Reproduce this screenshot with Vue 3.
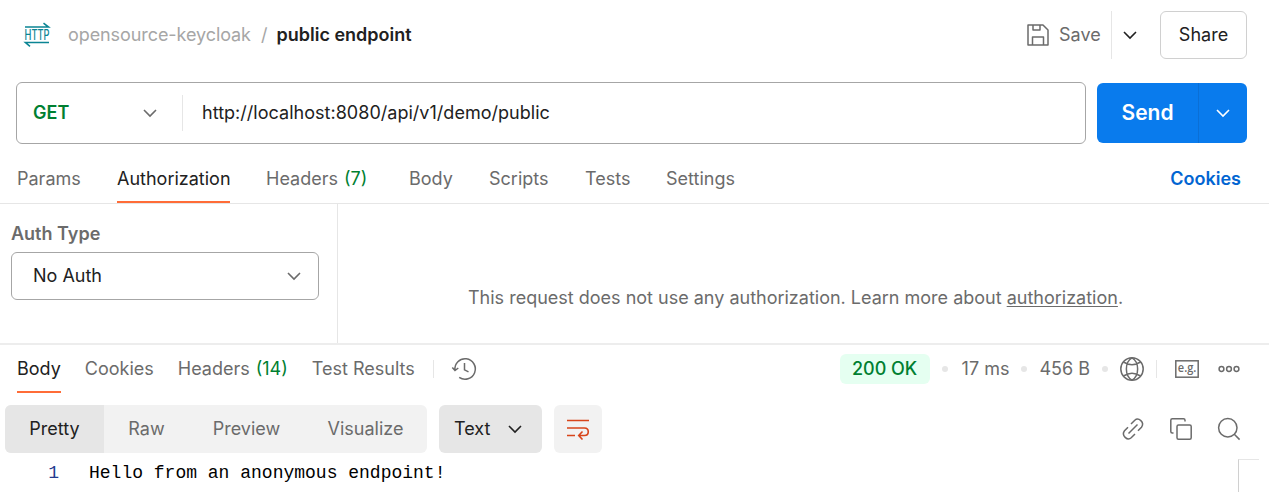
<script setup>
const requestTabs = [
  { label: 'Params', width: 64 },
  { label: 'Authorization', width: 113, active: true },
  { label: 'Headers', count: '(7)', width: 101 },
  { label: 'Body', width: 44 },
  { label: 'Scripts', width: 60 },
  { label: 'Tests', width: 45 },
  { label: 'Settings', width: 70 },
]
const responseTabs = [
  { label: 'Body', active: true },
  { label: 'Cookies' },
  { label: 'Headers', count: '(14)' },
  { label: 'Test Results' },
]
const views = ['Pretty', 'Raw', 'Preview', 'Visualize']
</script>

<template>
  <main class="app">
    <header class="top">
      <svg class="http" width="26" height="26" viewBox="0 0 26 26">
        <path d="M1 5H24.500L19.500 1.200M25 20.500H1.500L6 24.300" fill="none" stroke="#0b8594" stroke-width="1.6" />
        <text x="0.500" y="17.800" textLength="25" lengthAdjust="spacingAndGlyphs" font-size="14" font-weight="500" fill="#0b8594">HTTP</text>
      </svg>
      <span class="crumb">opensource-keycloak</span>
      <span class="slash">/</span>
      <span class="name">public endpoint</span>
      <div class="actions">
        <svg class="disk" width="22" height="22" viewBox="0 0 22 22">
          <path d="M1 1H16L21 6V21H1ZM6 1V6H13V1M5.5 21V13H16.5V21" />
        </svg>
        <span class="save">Save</span>
        <i class="save-line"></i>
        <svg class="chev dark" width="14" height="8" viewBox="0 0 14 8"><path d="M1 1L7 7L13 1" /></svg>
        <button class="share">Share</button>
      </div>
    </header>

    <section class="request">
      <div class="url-box">
        <span class="method">GET</span>
        <svg class="chev" width="14" height="8" viewBox="0 0 14 8"><path d="M1 1L7 7L13 1" /></svg>
        <i class="url-line"></i>
        <span class="url">http://localhost:8080/api/v1/demo/public</span>
      </div>
      <div class="send">
        <span class="send-label">Send</span>
        <span class="send-more"><svg class="chev white" width="14" height="8" viewBox="0 0 14 8"><path d="M1 1L7 7L13 1" /></svg></span>
      </div>
    </section>

    <nav class="req-tabs">
      <span v-for="t in requestTabs" :key="t.label" class="tab" :class="{ active: t.active }" :style="{ width: t.width + 'px' }">{{ t.label }}<span v-if="t.count" class="count">{{ t.count }}</span></span>
      <span class="cookies">Cookies</span>
    </nav>

    <section class="auth">
      <div class="auth-side">
        <span class="auth-title">Auth Type</span>
        <div class="select">
          <span>No Auth</span>
          <svg class="chev" width="14" height="8" viewBox="0 0 14 8"><path d="M1 1L7 7L13 1" /></svg>
        </div>
      </div>
      <p class="auth-info">This request does not use any authorization. Learn more about <u>authorization</u>.</p>
    </section>

    <nav class="res-tabs">
      <span v-for="t in responseTabs" :key="t.label" class="tab" :class="{ active: t.active }">{{ t.label }}<span v-if="t.count" class="count">{{ t.count }}</span></span>
      <i class="short-line"></i>
      <svg class="history line" width="26" height="24" viewBox="0 0 26 24">
        <path d="M3 13.300A10.200 10.200 0 1 1 7.200 20.300M.300 10.500L3 13.500L6.300 11M12.500 6V12.800L16.500 14.800" />
      </svg>
      <div class="status">
        <span class="ok">200 OK</span>
        <i class="dot first"></i>
        <span class="time">17 ms</span>
        <i class="dot"></i>
        <span class="size">456 B</span>
        <i class="dot"></i>
        <svg class="globe line" width="24" height="24" viewBox="0 0 24 24">
          <circle cx="12" cy="12" r="11.2" />
          <path d="M12 .8C4.5 5 4.5 19 12 23.2C19.500 19 19.500 5 12 .8M3.500 5Q12 10.400 20.500 5M3.500 19Q12 13.600 20.500 19" />
        </svg>
        <i class="short-line"></i>
        <svg class="example" width="24" height="18" viewBox="0 0 24 18">
          <rect x=".8" y=".8" width="22.400" height="16.400" fill="none" stroke="#6b6b6b" stroke-width="1.500" />
          <text class="eg" x="2.800" y="11.800" textLength="18.500" lengthAdjust="spacingAndGlyphs">e.g.</text>
        </svg>
        <svg class="more line" width="22" height="8" viewBox="0 0 22 8">
          <circle cx="3.500" cy="4" r="2.400" /><circle cx="11" cy="4" r="2.400" /><circle cx="18.500" cy="4" r="2.400" />
        </svg>
      </div>
    </nav>

    <section class="toolbar">
      <div class="views">
        <span v-for="(v, i) in views" :key="v" class="view" :class="['v' + i, { on: i === 0 }]">{{ v }}</span>
      </div>
      <div class="format">
        <span>Text</span>
        <svg class="chev dark" width="14" height="8" viewBox="0 0 14 8"><path d="M1 1L7 7L13 1" /></svg>
      </div>
      <div class="wrap">
        <svg width="24" height="22" viewBox="0 0 24 22">
          <path d="M1 2.500H23M1 10H18.500C23.500 10 23.500 17.500 18.500 17.500H13M16.500 13.500L12.700 17.500L16.500 21.500M1 17.500H9" />
        </svg>
      </div>
      <div class="tools">
        <svg class="line" width="22" height="22" viewBox="0 0 22 22">
          <path d="M6.500 15.500L15.500 6.500M9 6L12.800 2.200C16.500-1.200 23 4.500 19.500 9.200L16 12.800M13 16L9.200 19.800C5.500 23.200-1 17.500 2.500 12.800L6 9.200" />
        </svg>
        <svg class="line" width="22" height="22" viewBox="0 0 22 22">
          <rect x="7" y="7" width="14.200" height="14.200" rx="1.500" />
          <path d="M3.500 15H2.300Q.8 15 .8 13.500V2.300Q.8.8 2.300.8H13.500Q15 .8 15 2.300V3.500" />
        </svg>
        <svg class="line" width="22" height="22" viewBox="0 0 22 22">
          <circle cx="9.800" cy="9.800" r="9.200" /><path d="M16.300 16.300L21.600 21.600" />
        </svg>
      </div>
    </section>

    <section class="code">
      <span class="num">1</span>
      <code>Hello from an anonymous endpoint!</code>
      <i class="gutter"></i>
    </section>
  </main>
</template>

<style>
body { margin: 0; background: #fff; overflow: hidden; }
</style>

<style scoped>
* { box-sizing: border-box; }
.app { width: 1269px; height: 492px; overflow: hidden; background: #fff; color: #6b6b6b; font: 400 18px/24px Inter, sans-serif; white-space: nowrap; }
svg { display: block; flex: none; overflow: visible; }
i { display: block; flex: none; }
.line { fill: none; stroke: #6b6b6b; stroke-width: 1.5; }
.chev { fill: none; stroke: #6b6b6b; stroke-width: 1.6; }
.chev.dark { stroke: #212121; }
.chev.white { stroke: #fff; }

.top { display: flex; align-items: center; height: 70px; padding-left: 24px; }
.crumb { margin-left: 18px; width: 193px; color: #a6a6a6; letter-spacing: -0.08px; }
.slash { width: 15.5px; color: #a6a6a6; }
.name { color: #212121; font-weight: 600; }
.actions { display: flex; align-items: center; margin-left: auto; margin-right: 22px; }
.disk { fill: none; stroke: #6b6b6b; stroke-width: 1.5; stroke-linejoin: round; }
.save { width: 43px; margin-left: 10px; }
.save-line { width: 1px; height: 48px; margin: 0 11px 0 9px; background: #e6e6e6; }
.share { width: 87px; height: 48px; margin-left: 23px; padding: 0; border: 1px solid #d0d0d0; border-radius: 6px; background: #fff; color: #212121; font: inherit; }

.request { display: flex; align-items: center; height: 62px; margin-top: 12px; padding-left: 16px; }
.url-box { display: flex; align-items: center; width: 1070px; height: 62px; border: 1px solid #a6a6a6; border-radius: 6px; }
.method { width: 110px; margin-left: 16px; color: #007f31; font-weight: 600; }
.url-line { width: 1px; height: 36px; margin: 0 19px 0 25px; background: #e6e6e6; }
.url { color: #212121; letter-spacing: 0.025px; }
.send { display: flex; width: 150px; height: 60px; margin-left: 11px; border-radius: 6px; overflow: hidden; background: #097bed; color: #fff; }
.send-label { width: 101px; text-align: center; font-size: 21px; line-height: 60px; font-weight: 600; }
.send-more { display: flex; align-items: center; justify-content: center; flex: 1; border-left: 1px solid #0a6fd6; }

.req-tabs { display: flex; gap: 0 36px; height: 60px; padding: 10px 28px 0 17px; border-bottom: 1px solid #e6e6e6; }
.tab { flex: none; height: 49px; line-height: 49px; }
.tab.active { color: #212121; border-bottom: 2px solid #ff6c37; }
.count { margin-left: 6px; color: #007f31; }
.req-tabs .tab:nth-child(4) { margin-left: 6px; }
.cookies { margin-left: auto; line-height: 49px; color: #0265d2; font-weight: 600; }

.auth { display: flex; height: 139px; }
.auth-side { width: 338px; padding: 18px 18px 0 11px; border-right: 1px solid #e6e6e6; }
.auth-title { display: block; font-weight: 600; }
.select { display: flex; align-items: center; justify-content: space-between; width: 308px; height: 48px; margin-top: 6px; padding: 0 17px 0 21px; border: 1px solid #a6a6a6; border-radius: 6px; color: #212121; }
.auth-info { margin: 82px 0 0 130px; }
.auth-info u { text-underline-offset: 2px; text-decoration-thickness: 1px; }

.res-tabs { display: flex; align-items: center; gap: 24px; height: 50px; padding: 0 29px 0 17px; border-top: 2px solid #ededed; }
.res-tabs .tab { height: 48px; line-height: 47px; }
.short-line { width: 1px; height: 18px; background: #e6e6e6; }
.res-tabs > .short-line { margin: 0 -6px; }
.status { display: flex; align-items: center; margin-left: auto; }
.ok { width: 90px; height: 30px; border-radius: 6px; background: #e5fff1; color: #007f31; font-weight: 500; line-height: 30px; text-align: center; }
.dot { width: 6px; height: 6px; margin: 0 12px; border-radius: 50%; background: #e6e6e6; }
.dot.first { margin-right: 14px; }
.status .short-line { margin: 0 18px 0 12px; }
.eg { font: 600 12.5px "Open Sans", sans-serif; fill: #6b6b6b; }
.more { margin-left: 19px; }

.toolbar { display: flex; height: 48px; margin-top: 12px; padding: 0 29px 0 5px; }
.toolbar > div { height: 48px; line-height: 48px; }
.views { display: flex; width: 422px; border-radius: 6px; overflow: hidden; background: #f2f2f2; }
.view { text-align: center; }
.view.on { background: #e6e6e6; color: #212121; }
.v0 { width: 99px; }
.v1 { width: 85px; }
.v2 { width: 115px; }
.v3 { width: 123px; }
.format { display: flex; align-items: center; justify-content: space-between; width: 103px; margin-left: 12px; padding: 0 20px 0 15px; border-radius: 6px; background: #e6e6e6; color: #212121; }
.wrap { display: flex; align-items: center; justify-content: center; width: 48px; margin-left: 12px; border-radius: 6px; background: #f2f2f2; }
.wrap path { fill: none; stroke: #d8451b; stroke-width: 1.6; }
.tools { display: flex; align-items: center; gap: 26px; margin-left: auto; }

.code { display: flex; align-items: flex-start; height: 39px; padding-top: 8px; color: #000; font: 18px/24px "Liberation Mono", monospace; }
.num { width: 59px; text-align: right; color: #243b8f; }
.code code { margin-left: 30px; font: inherit; }
.gutter { width: 21px; height: 40px; margin: -2px 10px 0 auto; border-top: 1px solid #e6e6e6; border-left: 1px solid #d0d0d0; }
</style>
